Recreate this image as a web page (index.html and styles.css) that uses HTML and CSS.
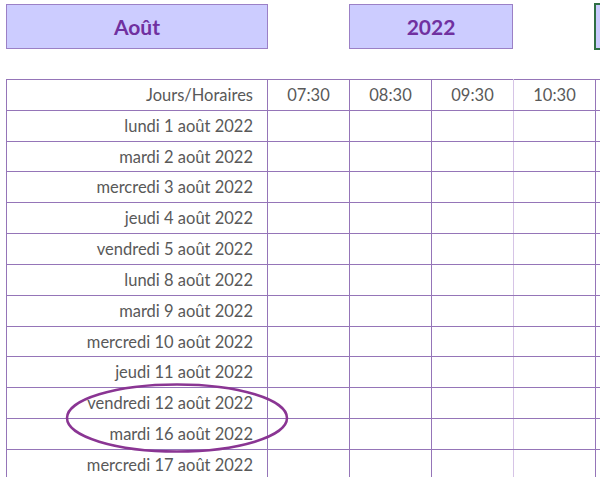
FILE: index.html
```html
<!DOCTYPE html>
<html lang="fr">
<head>
<meta charset="utf-8">
<link rel="stylesheet" href="styles.css">
</head>
<body>
<div class="sheet">
  <div class="top">
    <div class="box box-month">Août</div>
    <div class="box box-year">2022</div>
    <div class="box box-sel"></div>
  </div>
  <div class="grid-wrap">
    <table class="grid">
      <colgroup>
        <col class="c-day"><col class="c-h"><col class="c-h"><col class="c-h"><col class="c-h"><col class="c-h">
      </colgroup>
      <tr class="head">
        <td class="day">Jours/Horaires</td>
        <td>07:30</td><td>08:30</td><td>09:30</td><td>10:30</td><td></td>
      </tr>
      <tr><td class="day">lundi 1 août 2022</td><td></td><td></td><td></td><td></td><td></td></tr>
      <tr><td class="day">mardi 2 août 2022</td><td></td><td></td><td></td><td></td><td></td></tr>
      <tr><td class="day">mercredi 3 août 2022</td><td></td><td></td><td></td><td></td><td></td></tr>
      <tr><td class="day">jeudi 4 août 2022</td><td></td><td></td><td></td><td></td><td></td></tr>
      <tr><td class="day">vendredi 5 août 2022</td><td></td><td></td><td></td><td></td><td></td></tr>
      <tr><td class="day">lundi 8 août 2022</td><td></td><td></td><td></td><td></td><td></td></tr>
      <tr><td class="day">mardi 9 août 2022</td><td></td><td></td><td></td><td></td><td></td></tr>
      <tr><td class="day">mercredi 10 août 2022</td><td></td><td></td><td></td><td></td><td></td></tr>
      <tr><td class="day">jeudi 11 août 2022</td><td></td><td></td><td></td><td></td><td></td></tr>
      <tr><td class="day">vendredi 12 août 2022</td><td></td><td></td><td></td><td></td><td></td></tr>
      <tr><td class="day">mardi 16 août 2022</td><td></td><td></td><td></td><td></td><td></td></tr>
      <tr><td class="day">mercredi 17 août 2022</td><td></td><td></td><td></td><td></td><td></td></tr>
    </table>
    <svg class="ring" width="230" height="74" viewBox="0 0 230 74">
      <ellipse cx="115" cy="37" rx="110" ry="33.5" fill="none" stroke="#8a3593" stroke-width="2.5"/>
    </svg>
  </div>
</div>
</body>
</html>
```
FILE: styles.css
```css
html, body {
  margin: 0;
  padding: 0;
  background: #ffffff;
  overflow: hidden;
}
.sheet {
  width: 600px;
  height: 477px;
  overflow: hidden;
  font-family: "Lato", "Open Sans", sans-serif;
}
.top {
  display: flex;
  padding: 4px 0 0 6px;
  height: 45px;
}
.box {
  box-sizing: border-box;
  height: 45px;
  background: #ccccff;
  border: 1px solid #9b80c6;
  color: #7030a0;
  font-weight: bold;
  font-size: 21px;
  display: flex;
  align-items: center;
  justify-content: center;
  flex: none;
}
.box-month { width: 262px; }
.box-year { width: 164px; margin-left: 81px; }
.box-sel {
  width: 60px;
  margin-left: 81px;
  margin-top: -1px;
  height: 47px;
  border: 2px solid #2f6f44;
}
.grid-wrap {
  position: relative;
  margin-top: 30px;
  padding-left: 6px;
}
.grid {
  border-collapse: collapse;
  table-layout: fixed;
  width: 671px;
  color: #595959;
  font-size: 16.5px;
}
.c-day { width: 261px; }
.c-h { width: 82px; }
.grid td {
  border: 1px solid #9575b8;
  height: 30.83px;
  padding: 0;
  text-align: center;
  box-sizing: border-box;
}
.grid td:nth-child(4) {
  border-left-color: #d6c4e6;
  border-right-color: #d6c4e6;
}
.grid td.day {
  text-align: right;
  padding-right: 14px;
}
.ring {
  position: absolute;
  left: 62px;
  top: 302px;
}
```
